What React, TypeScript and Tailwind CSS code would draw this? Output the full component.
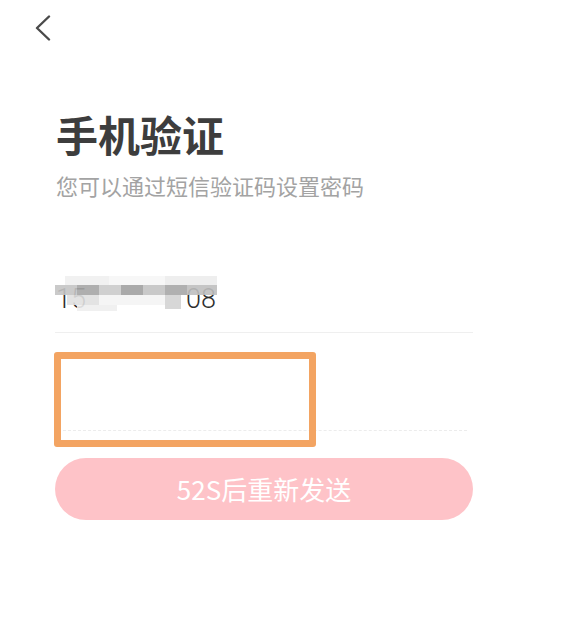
import React from "react";

const font = { fontFamily: '"Noto Sans CJK SC", "Noto Sans", sans-serif' };

// mosaic cells laid over the masked phone number
const mosaic = [
  { l: 0, t: 9, w: 22, h: 10, c: "#c4c4c4" },
  { l: 22, t: 9, w: 22, h: 10, c: "#a6a6a6" },
  { l: 44, t: 9, w: 22, h: 10, c: "#cbcbcb" },
  { l: 66, t: 9, w: 22, h: 10, c: "#a1a1a1" },
  { l: 88, t: 9, w: 22, h: 10, c: "#c3c3c3" },
  { l: 110, t: 9, w: 22, h: 10, c: "#a7a7a7" },
  { l: 132, t: 9, w: 30, h: 10, c: "#bfbfbf" },
  { l: 10, t: 0, w: 44, h: 9, c: "#efefef" },
  { l: 54, t: 0, w: 56, h: 9, c: "#f6f6f6" },
  { l: 110, t: 0, w: 52, h: 9, c: "#ececec" },
  { l: 12, t: 19, w: 32, h: 10, c: "#e0e0e0" },
  { l: 44, t: 19, w: 66, h: 10, c: "#f4f4f4" },
  { l: 110, t: 19, w: 16, h: 14, c: "#d3d3d3" },
  { l: 22, t: 29, w: 40, h: 6, c: "#eeeeee" },
];

export default function App() {
  return (
    <div className="w-[579px] h-[618px] bg-white flex flex-col" style={font}>
      <div className="pt-[15px] pl-[34px]">
        <svg width="18" height="26" viewBox="0 0 18 26" fill="none">
          <path d="M15 1.5 L3 13 L15 24.5" stroke="#4a4a4a" strokeWidth="2.4" strokeLinecap="round" strokeLinejoin="round" />
        </svg>
      </div>

      <div className="pl-[56px] mt-[72px]">
        <h1 className="text-[42px] leading-none font-bold text-[#3d3d3d]">手机验证</h1>
        <p className="mt-[19px] text-[22px] leading-none text-[#a3a3a3]">您可以通过短信验证码设置密码</p>
      </div>

      <div className="ml-[55px] w-[418px] mt-[74px]">
        <div className="h-[63px] border-b border-[#efefef] flex items-start">
          <div className="relative flex items-center pl-[1px] pt-[16px] text-[27px] leading-none text-[#2e2e2e]" style={{ fontFamily: '"Roboto", sans-serif', fontWeight: 300 }}>
            <span>15</span>
            <span className="w-[100px]"></span>
            <span>08</span>
            <div className="absolute left-[0px] top-[6px] w-[165px] h-[34px]">
              {mosaic.map((m, i) => (
                <div
                  key={i}
                  className="absolute opacity-90"
                  style={{ left: m.l, top: m.t, width: m.w, height: m.h, background: m.c }}
                />
              ))}
            </div>
          </div>
        </div>

        <div className="relative h-[98px]">
          <div className="absolute left-[8px] right-[6px] top-[97px] border-b border-dashed border-[#ececec]"></div>
          <div className="absolute left-[-1px] top-[19px] w-[262px] h-[95px] border-[7px] border-[#f3a462] rounded-[3px]"></div>
        </div>

        <button className="mt-[27px] w-[418px] h-[62px] rounded-full bg-[#fec3c8] text-white text-[26px] leading-none">
          52S后重新发送
        </button>
      </div>
    </div>
  );
}
